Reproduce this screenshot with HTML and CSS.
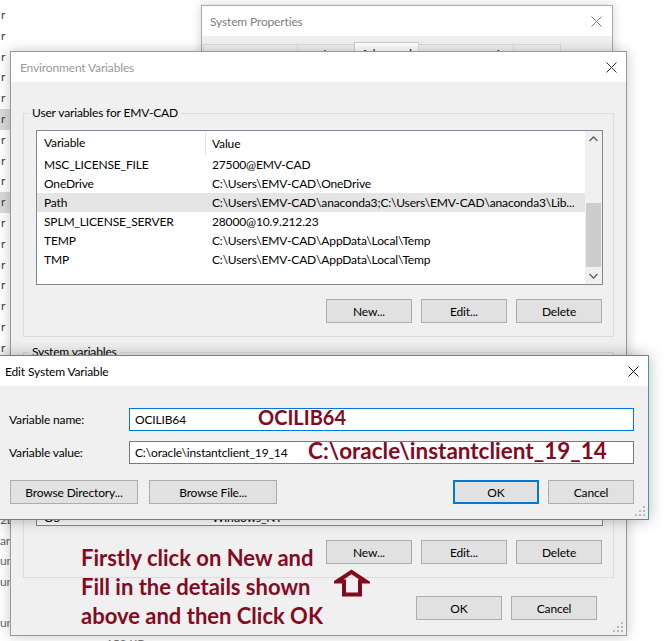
FILE: index.html
```html
<!DOCTYPE html>
<html lang="en">
<head>
<meta charset="utf-8">
<title>Environment Variables</title>
<link rel="stylesheet" href="styles.css">
</head>
<body>
<div class="desk">

  <ul class="bg-list bg-list-top">
    <li>r</li><li>r</li><li>r</li><li>r</li><li>r</li>
    <li class="sel">r</li><li>r</li><li>r</li><li>r</li>
    <li class="sel">r</li><li>r</li><li>r</li><li>r</li><li>r</li><li>r</li><li>r</li><li>r</li>
  </ul>
  <ul class="bg-list bg-list-bottom">
    <li>2L</li><li>ar</li><li>un</li><li>un</li><li></li><li>un</li>
  </ul>
  <div class="bg-footer">152 KB</div>

  <section class="win sysprops">
    <header class="titlebar">
      <span class="title">System Properties</span>
      <svg class="close" width="11" height="11" viewBox="0 0 11 11"><path d="M0.5 0.5 L10.5 10.5 M10.5 0.5 L0.5 10.5" stroke="#777" stroke-width="1"/></svg>
    </header>
    <div class="sp-body">
      <div class="tabs">
        <span class="tab w1">Computer Name</span>
        <span class="tab w2">Hardware</span>
        <span class="tab w3 active">Advanced</span>
        <span class="tab w4">System Protection</span>
        <span class="tab w5">Remote</span>
      </div>
    </div>
  </section>

  <section class="win envvars">
    <header class="titlebar">
      <span class="title">Environment Variables</span>
      <svg class="close" width="11" height="11" viewBox="0 0 11 11"><path d="M0.5 0.5 L10.5 10.5 M10.5 0.5 L0.5 10.5" stroke="#333" stroke-width="1"/></svg>
    </header>
    <div class="env-body">
      <fieldset class="group group-user">
        <legend>User variables for EMV-CAD</legend>
        <div class="listview lv-user">
          <div class="lv-main">
            <div class="lv-row lv-head"><span class="c1">Variable</span><span class="c2">Value</span></div>
            <div class="lv-row"><span class="c1">MSC_LICENSE_FILE</span><span class="c2">27500@EMV-CAD</span></div>
            <div class="lv-row"><span class="c1">OneDrive</span><span class="c2">C:\Users\EMV-CAD\OneDrive</span></div>
            <div class="lv-row hl"><span class="c1">Path</span><span class="c2">C:\Users\EMV-CAD\anaconda3;C:\Users\EMV-CAD\anaconda3\Lib...</span></div>
            <div class="lv-row"><span class="c1">SPLM_LICENSE_SERVER</span><span class="c2">28000@10.9.212.23</span></div>
            <div class="lv-row"><span class="c1">TEMP</span><span class="c2">C:\Users\EMV-CAD\AppData\Local\Temp</span></div>
            <div class="lv-row"><span class="c1">TMP</span><span class="c2">C:\Users\EMV-CAD\AppData\Local\Temp</span></div>
          </div>
          <div class="scrollbar">
            <svg class="sb-arrow" width="17" height="17" viewBox="0 0 17 17"><path d="M4.5 10 L8.5 6 L12.5 10" fill="none" stroke="#606060" stroke-width="1.3"/></svg>
            <div class="sb-track"><div class="sb-thumb"></div></div>
            <svg class="sb-arrow" width="17" height="17" viewBox="0 0 17 17"><path d="M4.5 7 L8.5 11 L12.5 7" fill="none" stroke="#606060" stroke-width="1.3"/></svg>
          </div>
        </div>
        <div class="btn-row">
          <button class="btn">New...</button>
          <button class="btn">Edit...</button>
          <button class="btn">Delete</button>
        </div>
      </fieldset>

      <fieldset class="group group-sys">
        <legend>System variables</legend>
        <div class="listview lv-sys">
          <div class="lv-main lv-bottom">
            <div class="lv-row"><span class="c1">OS</span><span class="c2">Windows_NT</span></div>
          </div>
        </div>
        <div class="btn-row">
          <button class="btn">New...</button>
          <button class="btn">Edit...</button>
          <button class="btn">Delete</button>
        </div>
      </fieldset>

      <div class="dlg-buttons">
        <button class="btn">OK</button>
        <button class="btn">Cancel</button>
      </div>
    </div>
    <svg class="grip" width="11" height="11" viewBox="0 0 11 11"><g fill="#b8b8b8"><rect x="8" y="0" width="2" height="2"/><rect x="4" y="4" width="2" height="2"/><rect x="8" y="4" width="2" height="2"/><rect x="0" y="8" width="2" height="2"/><rect x="4" y="8" width="2" height="2"/><rect x="8" y="8" width="2" height="2"/></g></svg>
  </section>

  <section class="win editvar">
    <header class="titlebar">
      <span class="title">Edit System Variable</span>
      <svg class="close" width="11" height="11" viewBox="0 0 11 11"><path d="M0.5 0.5 L10.5 10.5 M10.5 0.5 L0.5 10.5" stroke="#111" stroke-width="1"/></svg>
    </header>
    <div class="ev-body">
      <div class="field">
        <label class="field-label">Variable name:</label>
        <div class="input focus">OCILIB64</div>
      </div>
      <div class="field">
        <label class="field-label">Variable value:</label>
        <div class="input">C:\oracle\instantclient_19_14</div>
      </div>
      <div class="ev-buttons">
        <button class="btn wide">Browse Directory...</button>
        <button class="btn wide">Browse File...</button>
        <span class="spacer"></span>
        <button class="btn default">OK</button>
        <button class="btn">Cancel</button>
      </div>
    </div>
    <svg class="grip" width="11" height="11" viewBox="0 0 11 11"><g fill="#b8b8b8"><rect x="8" y="0" width="2" height="2"/><rect x="4" y="4" width="2" height="2"/><rect x="8" y="4" width="2" height="2"/><rect x="0" y="8" width="2" height="2"/><rect x="4" y="8" width="2" height="2"/><rect x="8" y="8" width="2" height="2"/></g></svg>
  </section>

  <div class="note note-name">OCILIB64</div>
  <div class="note note-value">C:\oracle\instantclient_19_14</div>
  <div class="note note-steps">Firstly click on New and<br>Fill in the details shown<br>above and then Click OK</div>
  <svg class="note-arrow" width="36" height="28" viewBox="0 0 36 28"><polygon points="17.5,2.8 32,12.5 26,12.5 26,25.5 10,25.5 10,12.5 3,12.5" fill="none" stroke="#830b1f" stroke-width="4" stroke-linejoin="miter"/></svg>
</div>
</body>
</html>
```

FILE: styles.css
```css
* { box-sizing: border-box; }
html, body { margin: 0; padding: 0; background: #fff; }
body {
  font-family: "Lato", "Noto Sans", sans-serif;
  font-size: 12px;
  letter-spacing: -0.15px;
  color: #000;
  width: 665px;
  height: 641px;
  overflow: hidden;
}
.desk { position: relative; width: 665px; height: 641px; overflow: hidden; background: #fff; }

/* underlying explorer window fragments */
.bg-list { position: absolute; left: 0; margin: 0; padding: 0; list-style: none; width: 10px; overflow: hidden; color: #444; }
.bg-list li { height: 20.8px; line-height: 20.8px; padding-left: 1px; white-space: nowrap; }
.bg-list li.sel { background: #d9d9d9; }
.bg-list-top { top: 5px; }
.bg-list-bottom { top: 510px; color: #666; }
.bg-list-bottom li { height: 20.6px; line-height: 20.6px; padding-left: 0; }
.bg-footer { position: absolute; left: 106px; top: 636px; color: #777; }

/* windows */
.win { position: absolute; background: #f0f0f0; display: flex; flex-direction: column; }
.titlebar { background: #fff; height: 30px; display: flex; align-items: center; justify-content: space-between; flex: none; }
.title { color: #999; }

.sysprops { left: 201px; top: 5px; width: 412px; height: 120px; border: 1px solid #aaa; box-shadow: 0 0 10px rgba(0,0,0,0.18); }
.sysprops .titlebar { padding: 0 10px 0 8px; }
.sysprops .title { color: #808080; }
.sp-body { padding: 6px 0 0 1px; }
.tabs { display: flex; align-items: flex-end; height: 22px; }
.tab { height: 20px; border: 1px solid #d9d9d9; border-bottom: none; margin-right: -1px; background: #f0f0f0; display: flex; align-items: center; justify-content: center; color: #000; white-space: nowrap; overflow: hidden; }
.tab.active { height: 22px; background: #fff; border-color: #ccc; }
.w1 { width: 95px; } .w2 { width: 58px; } .w3 { width: 65px; } .w4 { width: 96px; } .w5 { width: 48px; }

.envvars { left: 10px; top: 51px; width: 617px; height: 585px; border: 1px solid #999; box-shadow: 0 0 12px rgba(0,0,0,0.22); }
.envvars .titlebar { padding: 0 9px 0 9px; }
.env-body { padding: 23px 12px 0 12px; display: flex; flex-direction: column; }

.group { margin: 0; border: 1px solid #dcdcdc; padding: 9px 10px 13px 12px; min-width: 0; }
.group legend { padding: 0 3px; margin-left: -7px; line-height: 16px; height: 16px; }
.group-sys { margin-top: 7px; }

.listview { background: #fff; border: 1px solid #828790; display: flex; }
.lv-user { height: 155px; }
.lv-sys { height: 157px; }
.lv-main { flex: 1; display: flex; flex-direction: column; min-width: 0; }
.lv-bottom { justify-content: flex-end; }
.lv-bottom .lv-row { padding-top: 4px; }
.lv-row { display: flex; height: 19px; align-items: center; white-space: nowrap; }
.lv-row.hl { background: #e5e5e5; }
.lv-head { height: 24px; align-items: center; }
.lv-head .c1 { border-right: 1px solid #e5e5e5; height: 24px; line-height: 24px; }
.c1 { width: 169px; padding-left: 7px; flex: none; }
.c2 { padding-left: 6px; }

.scrollbar { width: 17px; background: #f0f0f0; display: flex; flex-direction: column; flex: none; }
.sb-arrow { display: block; flex: none; }
.sb-track { flex: 1; display: flex; flex-direction: column; justify-content: flex-end; }
.sb-thumb { height: 64px; width: 15px; margin-left: 1px; background: #cdcdcd; }

.btn-row { display: flex; justify-content: flex-end; gap: 9px; margin-top: 14px; padding-right: 1px; }
.btn {
  font: inherit; color: #000; letter-spacing: inherit;
  width: 86px; height: 24px;
  background: #e1e1e1; border: 1px solid #adadad; border-radius: 0;
  padding: 0; margin: 0;
}
.btn.wide { width: 128px; }
.btn.default { border: 2px solid #0078d7; }

.dlg-buttons { display: flex; justify-content: flex-end; gap: 9px; margin-top: 18px; padding-right: 17px; }

.grip { position: absolute; right: 2px; bottom: 2px; }

.editvar { left: -1px; top: 355px; width: 650px; height: 165px; border: 1px solid #3a98a6; box-shadow: 0 0 14px rgba(0,0,0,0.28); z-index: 5; }
.editvar .titlebar { padding: 0 9px 0 5px; }
.editvar .title { color: #000; }
.ev-body { padding: 22px 14px 0 9px; display: flex; flex-direction: column; }
.field { display: flex; align-items: center; height: 23px; margin-bottom: 10px; }
.field-label { width: 120px; flex: none; }
.input { flex: 1; height: 23px; background: #fff; border: 1px solid #7a7a7a; padding-left: 5px; display: flex; align-items: center; }
.input.focus { border-color: #0078d7; }
.ev-buttons { display: flex; align-items: center; margin-top: 6px; gap: 9px; padding-left: 1px; }
.ev-buttons .btn.wide + .btn.wide { margin-left: 2px; }
.spacer { flex: 1; }

/* annotations drawn over the screenshot */
.note { position: absolute; z-index: 10; color: #830b1f; font-family: "Lato", sans-serif; font-weight: 700; font-size: 22px; letter-spacing: 0; white-space: nowrap; }
.note-name { left: 258px; top: 405px; font-size: 20px; }
.note-value { left: 308px; top: 437px; font-size: 22.5px; }
.note-steps { left: 81px; top: 543px; line-height: 29px; }
.note-arrow { position: absolute; z-index: 10; left: 334px; top: 569px; }
```
